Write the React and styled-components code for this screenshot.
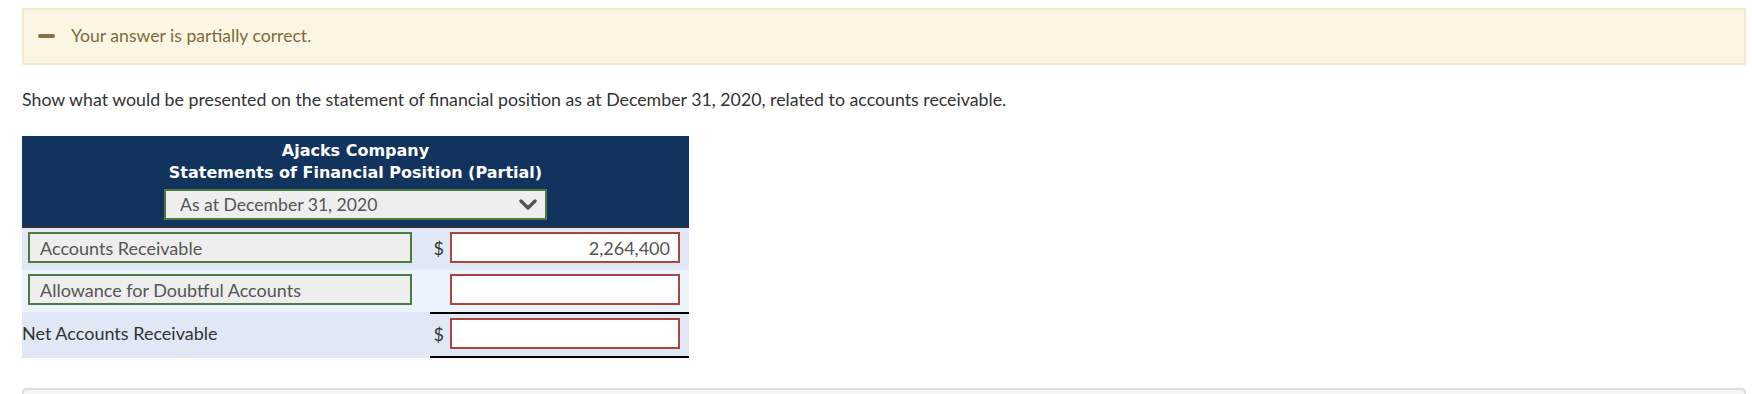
import React from "react";
import styled, { createGlobalStyle } from "styled-components";

const Global = createGlobalStyle`
  html, body { margin: 0; padding: 0; background: #fff; }
  body { font-family: Lato, "Liberation Sans", sans-serif; color: #333; }
  * { box-sizing: border-box; }
`;

const Page = styled.div`
  padding: 8px 6px 0 22px;
  display: flex;
  flex-direction: column;
`;

const Feedback = styled.div`
  height: 57px;
  background: #fbf6e4;
  border: 2px solid #f5e7c8;
  display: flex;
  align-items: center;
  padding: 0 0 2px 14px;
  gap: 16px;
  color: #7f6a3b;
  font-size: 17.6px;
`;

const Dash = styled.span`
  width: 17px;
  height: 4px;
  border-radius: 2px;
  background: #8a7040;
`;

const Prompt = styled.p`
  margin: 24px 0 0;
  font-size: 17.75px;
  line-height: 20px;
  color: #333;
`;

const Table = styled.div`
  margin-top: 27px;
  width: 667px;
  display: flex;
  flex-direction: column;
`;

const Header = styled.div`
  background: #13335f;
  border-bottom: 2px solid #2b3137;
  padding: 4px 0 6px;
  display: flex;
  flex-direction: column;
  align-items: center;
  color: #fff;
  font-family: "DejaVu Sans", Verdana, sans-serif;
  font-weight: bold;
  font-size: 16px;
  line-height: 22px;
`;

const Title = styled.div``;

const Dropdown = styled.div`
  margin-top: 5px;
  width: 383px;
  height: 31px;
  background: #eee;
  border: 2px solid #4c7a3f;
  display: flex;
  align-items: center;
  justify-content: space-between;
  padding: 0 8px 0 14px;
  font-family: Lato, "Liberation Sans", sans-serif;
  font-weight: normal;
  font-size: 17.6px;
  line-height: 20px;
  color: #555;
`;

const Row = styled.div`
  display: flex;
  height: ${(p) => p.$h}px;
  background: ${(p) => (p.$alt ? "#ebf3fd" : "#dfe8f4")};
`;

const LabelCell = styled.div`
  width: 408px;
  display: flex;
  align-items: ${(p) => (p.$plain ? "center" : "flex-start")};
  padding: ${(p) => (p.$plain ? "0 0 4px 0" : "4px 0 0 6px")};
  font-size: 18px;
  line-height: 20px;
  color: #333;
`;

const SelectBox = styled.div`
  width: 384px;
  height: 31px;
  background: #eee;
  border: 2px solid #4c7a3f;
  display: flex;
  align-items: center;
  padding-left: 10px;
  font-size: 18px;
  line-height: 20px;
  color: #555;
`;

const AmountCell = styled.div`
  flex: 1;
  display: flex;
  align-items: flex-start;
  padding-top: 4px;
  border-top: ${(p) => (p.$rule ? "2px solid #000" : "none")};
  border-bottom: ${(p) => (p.$rule ? "2px solid #000" : "none")};
`;

const Dollar = styled.span`
  width: 20px;
  height: 31px;
  display: flex;
  align-items: center;
  justify-content: flex-end;
  padding-right: 6px;
  font-size: 18px;
  color: #333;
`;

const Input = styled.div`
  width: 230px;
  height: 31px;
  background: #fff;
  border: 2px solid #a8453f;
  display: flex;
  align-items: center;
  justify-content: flex-end;
  padding-right: 8px;
  font-size: 18px;
  line-height: 20px;
  color: #555;
`;

const NextCard = styled.div`
  margin-top: 30px;
  height: 20px;
  background: #f5f5f5;
  border: 2px solid #ddd;
  border-bottom: none;
  border-radius: 4px 4px 0 0;
`;

const Chevron = () => (
  <svg width="18" height="12" viewBox="0 0 18 12">
    <polyline points="2,2 9,9 16,2" fill="none" stroke="#555" strokeWidth="3.4" strokeLinecap="round" strokeLinejoin="round" />
  </svg>
);

export default function App() {
  return (
    <>
      <Global />
      <Page>
        <Feedback>
          <Dash />
          <span>Your answer is partially correct.</span>
        </Feedback>
        <Prompt>
          Show what would be presented on the statement of financial position as at December 31, 2020, related to accounts receivable.
        </Prompt>
        <Table>
          <Header>
            <Title>Ajacks Company</Title>
            <Title>Statements of Financial Position (Partial)</Title>
            <Dropdown>
              <span>As at December 31, 2020</span>
              <Chevron />
            </Dropdown>
          </Header>
          <Row $h={42}>
            <LabelCell>
              <SelectBox>Accounts Receivable</SelectBox>
            </LabelCell>
            <AmountCell>
              <Dollar>$</Dollar>
              <Input>2,264,400</Input>
            </AmountCell>
          </Row>
          <Row $h={42} $alt>
            <LabelCell>
              <SelectBox>Allowance for Doubtful Accounts</SelectBox>
            </LabelCell>
            <AmountCell>
              <Dollar />
              <Input />
            </AmountCell>
          </Row>
          <Row $h={46}>
            <LabelCell $plain>Net Accounts Receivable</LabelCell>
            <AmountCell $rule>
              <Dollar>$</Dollar>
              <Input />
            </AmountCell>
          </Row>
        </Table>
        <NextCard />
      </Page>
    </>
  );
}
